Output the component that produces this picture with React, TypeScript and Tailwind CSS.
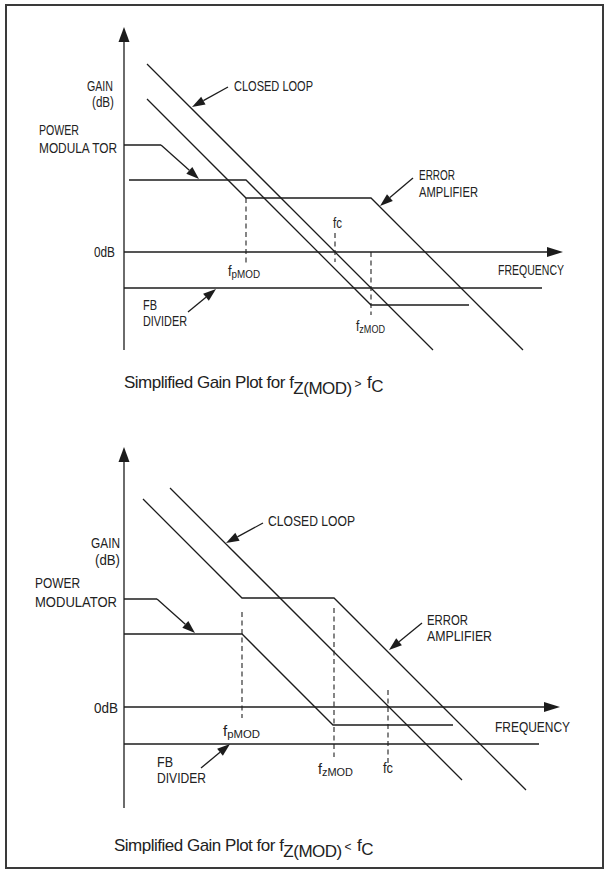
import React from "react";

const INK = "#1c1c1c";
const FONT = "'Liberation Sans Narrow', 'Liberation Sans', Arial, sans-serif";

type Pt = [number, number];

type Lbl = { x: number; y: number; w: number; t: string; sub?: string };

type Plot = {
  yAxis: [number, number];
  zero: number;
  zeroEnd: number;
  fb: [number, number];
  closed: Pt[];
  error: Pt[];
  power: Pt[];
  leader: Pt[];
  arrows: [number, number, number, number][];
  dashes: [number, number, number][];
  labels: Lbl[];
};

const top: Plot = {
  yAxis: [27, 350],
  zero: 252,
  zeroEnd: 563,
  fb: [288, 542],
  closed: [
    [147, 64],
    [433, 350],
  ],
  error: [
    [147, 99],
    [246, 198],
    [371, 198],
    [523, 350],
  ],
  power: [
    [129, 180],
    [246, 180],
    [371, 305],
    [469, 305],
  ],
  leader: [
    [124, 145],
    [161, 145],
  ],
  arrows: [
    [161, 145, 199, 179],
    [228, 87, 192, 107],
    [413, 178, 380, 206],
    [188, 312, 216, 289],
  ],
  dashes: [
    [246, 198, 263],
    [335, 233, 262],
    [371, 252, 315],
  ],
  labels: [
    { x: 87, y: 91, w: 26, t: "GAIN" },
    { x: 92, y: 107, w: 22, t: "(dB)" },
    { x: 39, y: 135, w: 40, t: "POWER" },
    { x: 39, y: 153, w: 78, t: "MODULA TOR" },
    { x: 94, y: 257, w: 21, t: "0dB" },
    { x: 234, y: 91, w: 79, t: "CLOSED LOOP" },
    { x: 419, y: 180, w: 36, t: "ERROR" },
    { x: 419, y: 197, w: 59, t: "AMPLIFIER" },
    { x: 498, y: 275, w: 66, t: "FREQUENCY" },
    { x: 143, y: 310, w: 14, t: "FB" },
    { x: 143, y: 326, w: 44, t: "DIVIDER" },
    { x: 228, y: 276, w: 32, t: "f", sub: "pMOD" },
    { x: 333, y: 228, w: 9, t: "fc" },
    { x: 356, y: 331, w: 29, t: "f", sub: "zMOD" },
  ],
};

const bottom: Plot = {
  yAxis: [447, 808],
  zero: 707,
  zeroEnd: 560,
  fb: [744, 539],
  closed: [
    [170, 488],
    [462, 780],
  ],
  error: [
    [143, 499],
    [242, 598],
    [334, 598],
    [526, 790],
  ],
  power: [
    [124, 634],
    [242, 634],
    [333, 725],
    [453, 725],
  ],
  leader: [
    [124, 599],
    [157, 599],
  ],
  arrows: [
    [157, 599, 195, 633],
    [263, 523, 226, 543],
    [422, 623, 389, 650],
    [201, 768, 230, 744],
  ],
  dashes: [
    [242, 612, 718],
    [334, 608, 757],
    [388, 690, 767],
  ],
  labels: [
    { x: 91, y: 548, w: 29, t: "GAIN" },
    { x: 95, y: 565, w: 25, t: "(dB)" },
    { x: 35, y: 588, w: 45, t: "POWER" },
    { x: 35, y: 607, w: 82, t: "MODULATOR" },
    { x: 94, y: 713, w: 24, t: "0dB" },
    { x: 268, y: 526, w: 87, t: "CLOSED LOOP" },
    { x: 427, y: 625, w: 41, t: "ERROR" },
    { x: 427, y: 641, w: 65, t: "AMPLIFIER" },
    { x: 495, y: 732, w: 75, t: "FREQUENCY" },
    { x: 157, y: 767, w: 16, t: "FB" },
    { x: 157, y: 783, w: 49, t: "DIVIDER" },
    { x: 223, y: 736, w: 37, t: "f", sub: "pMOD" },
    { x: 383, y: 773, w: 10, t: "fc" },
    { x: 318, y: 774, w: 35, t: "f", sub: "zMOD" },
  ],
};

const pts = (p: Pt[]) => p.map(([x, y]) => `${x},${y}`).join(" ");

const Arrow = ({ a }: { a: [number, number, number, number] }) => {
  const [x1, y1, x2, y2] = a;
  const dx = x2 - x1;
  const dy = y2 - y1;
  const len = Math.hypot(dx, dy);
  const ux = dx / len;
  const uy = dy / len;
  const bx = x2 - ux * 13;
  const by = y2 - uy * 13;
  const px = -uy * 4.5;
  const py = ux * 4.5;
  return (
    <g>
      <line x1={x1} y1={y1} x2={bx} y2={by} stroke={INK} strokeWidth={1.3} />
      <polygon
        points={`${x2},${y2} ${bx + px},${by + py} ${bx - px},${by - py}`}
        fill={INK}
      />
    </g>
  );
};

const Chart = ({ d, y0, h }: { d: Plot; y0: number; h: number }) => {
  const ax = 124;
  return (
    <svg
      width={595}
      height={h}
      viewBox={`7 ${y0} 595 ${h}`}
      className="block"
      fontFamily={FONT}
    >
      <g stroke={INK} strokeWidth={1.3} fill="none">
        <line x1={ax} y1={d.yAxis[0] + 12} x2={ax} y2={d.yAxis[1]} />
        <line x1={ax} y1={d.zero} x2={d.zeroEnd - 14} y2={d.zero} />
        <line x1={ax} y1={d.fb[0]} x2={d.fb[1]} y2={d.fb[0]} />
        <polyline points={pts(d.closed)} />
        <polyline points={pts(d.error)} />
        <polyline points={pts(d.power)} />
        <polyline points={pts(d.leader)} />
      </g>
      <polygon
        points={`${ax},${d.yAxis[0]} ${ax - 5.5},${d.yAxis[0] + 15} ${ax + 5.5},${d.yAxis[0] + 15}`}
        fill={INK}
      />
      <polygon
        points={`${d.zeroEnd},${d.zero} ${d.zeroEnd - 16},${d.zero - 5} ${d.zeroEnd - 16},${d.zero + 5}`}
        fill={INK}
      />
      {d.arrows.map((a, i) => (
        <Arrow key={i} a={a} />
      ))}
      <g stroke="#222" strokeWidth={1.1} strokeDasharray="5 3.5">
        {d.dashes.map(([x, a, b], i) => (
          <line key={i} x1={x} y1={a} x2={x} y2={b} />
        ))}
      </g>
      <g fill="#222" fontSize={14.5}>
        {d.labels.map((l, i) => (
          <text
            key={i}
            x={l.x}
            y={l.y}
            textLength={l.w}
            lengthAdjust="spacingAndGlyphs"
          >
            {l.t}
            {l.sub && (
              <tspan fontSize={11} dy={2}>
                {l.sub}
              </tspan>
            )}
          </text>
        ))}
      </g>
    </svg>
  );
};

const Caption = ({ op, pad }: { op: string; pad: string }) => (
  <div
    className={`h-[20px] text-[17px] leading-[20px] tracking-[-0.5px] text-[#222] whitespace-nowrap ${pad}`}
    style={{ fontFamily: "'Liberation Sans', Arial, sans-serif" }}
  >
    Simplified Gain Plot for f<span className="align-[-6px]">Z(MOD)</span>
    <span className="text-[12px]"> {op} </span>
    <span className="ml-[3px]">f</span>
    <span className="align-[-4px]">C</span>
  </div>
);

export default function App() {
  return (
    <div className="ml-[5px] mt-[4px] w-[599px] h-[865px] border-2 border-[#3a3a3a] bg-white flex flex-col">
      <Chart d={top} y0={6} h={367} />
      <Caption op=">" pad="pl-[117px]" />
      <Chart d={bottom} y0={393} h={443} />
      <Caption op="<" pad="pl-[107px]" />
    </div>
  );
}
